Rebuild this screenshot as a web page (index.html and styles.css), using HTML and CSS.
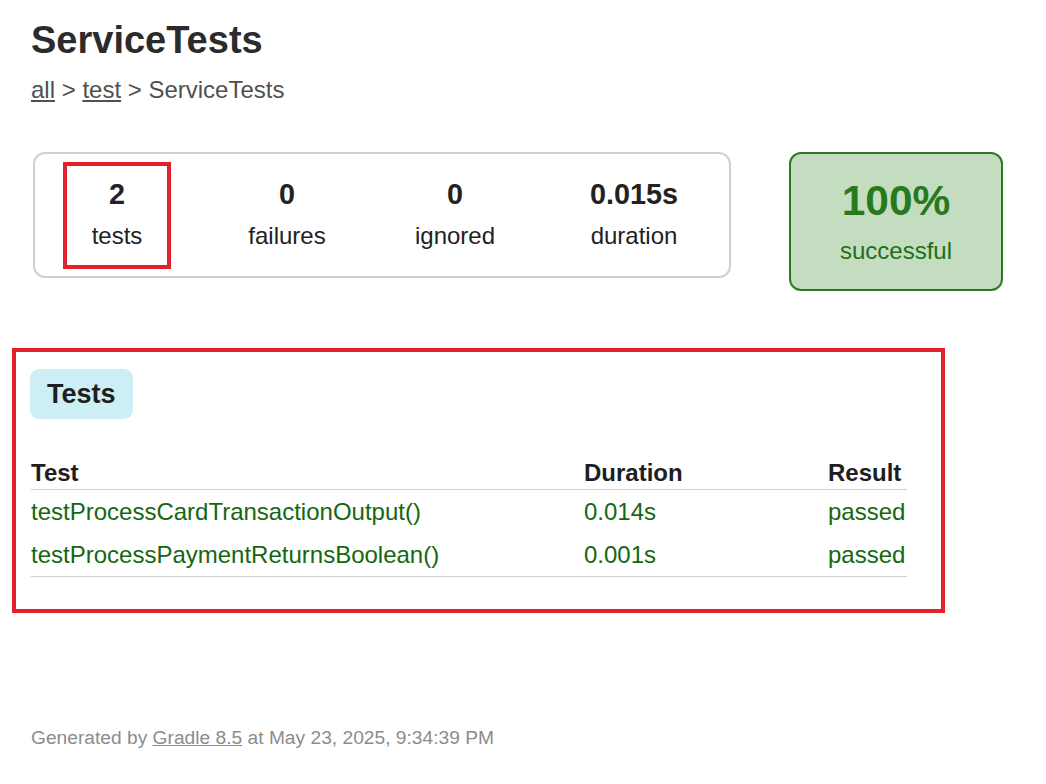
FILE: index.html
```html
<!DOCTYPE html>
<html lang="en">
<head>
<meta charset="utf-8">
<title>Test results - ServiceTests</title>
<link rel="stylesheet" href="styles.css">
</head>
<body>
<div class="page">
  <h1 class="title">ServiceTests</h1>
  <div class="breadcrumbs"><a href="#">all</a> &gt; <a href="#">test</a> &gt; ServiceTests</div>

  <div class="summary">
    <div class="summary-group">
      <div class="info-box">
        <div class="highlight">
          <div class="counter">2</div>
          <p class="label">tests</p>
        </div>
      </div>
      <div class="info-box">
        <div class="counter">0</div>
        <p class="label">failures</p>
      </div>
      <div class="info-box">
        <div class="counter">0</div>
        <p class="label">ignored</p>
      </div>
      <div class="info-box info-box-wide">
        <div class="counter">0.015s</div>
        <p class="label">duration</p>
      </div>
    </div>
    <div class="success-rate">
      <div class="percent">100%</div>
      <p class="label">successful</p>
    </div>
  </div>

  <div class="tests-frame">
    <div class="tab">Tests</div>
    <table class="tests-table">
      <thead>
        <tr>
          <th class="col-name">Test</th>
          <th class="col-duration">Duration</th>
          <th class="col-result">Result</th>
        </tr>
      </thead>
      <tbody>
        <tr>
          <td>testProcessCardTransactionOutput()</td>
          <td>0.014s</td>
          <td>passed</td>
        </tr>
        <tr>
          <td>testProcessPaymentReturnsBoolean()</td>
          <td>0.001s</td>
          <td>passed</td>
        </tr>
      </tbody>
    </table>
  </div>

  <div class="footer">Generated by <a href="#">Gradle 8.5</a> at May 23, 2025, 9:34:39 PM</div>
</div>
</body>
</html>
```

FILE: styles.css
```css
html, body {
  margin: 0;
  padding: 0;
  background: #ffffff;
}

body {
  font-family: "Liberation Sans", Arial, sans-serif;
  font-size: 24px;
  color: #262626;
}

.page {
  padding: 19px 31px 0 31px;
}

.title {
  margin: 0 0 15px 0;
  font-size: 38px;
  font-weight: bold;
  line-height: 42px;
  color: #2b2b2b;
}

.breadcrumbs {
  line-height: 27px;
  color: #505050;
}

.breadcrumbs a {
  color: #505050;
}

.summary {
  display: flex;
  align-items: flex-start;
  gap: 58px;
  margin: 49px 0 0 2px;
}

.summary-group {
  display: flex;
  width: 698px;
  box-sizing: border-box;
  border: 2px solid #d0d0d0;
  border-radius: 12px;
}

.info-box {
  width: 168px;
  padding: 24px 0 27px 0;
  text-align: center;
  display: flex;
  flex-direction: column;
  align-items: center;
}

.info-box-wide {
  width: 190px;
}

.highlight {
  width: 108px;
  box-sizing: border-box;
  border: 4px solid #e3212d;
  margin: -16px 0 -20px -4px;
  padding: 12px 0 16px 0;
}

.counter {
  font-size: 28.8px;
  font-weight: bold;
  line-height: 32px;
  margin-bottom: 12px;
  color: #222222;
}

.label {
  margin: 0;
  line-height: 27px;
  color: #222222;
}

.success-rate {
  width: 214px;
  box-sizing: border-box;
  border: 2px solid #2b7a20;
  border-radius: 12px;
  background: #c4ddc1;
  padding: 23px 0 25px 0;
  text-align: center;
}

.percent {
  font-size: 42.5px;
  font-weight: bold;
  line-height: 48px;
  margin-bottom: 12px;
  color: #267a1b;
}

.success-rate .label {
  color: #1f6f16;
}

.tests-frame {
  margin: 57px 0 0 -19px;
  width: 933px;
  box-sizing: border-box;
  border: 4px solid #e3212d;
  padding: 17px 34px 32px 14px;
}

.tab {
  display: inline-block;
  background: #cdeef4;
  border-radius: 9px;
  padding: 10px 17px;
  font-size: 27px;
  font-weight: bold;
  line-height: 30px;
  color: #1e1e1e;
}

.tests-table {
  margin: 40px 0 0 1px;
  width: 876px;
  border-collapse: collapse;
}

.tests-table th,
.tests-table td {
  padding: 0;
  text-align: left;
  line-height: 27px;
  white-space: nowrap;
}

.tests-table th {
  font-weight: bold;
  color: #1e1e1e;
  padding-bottom: 3px;
  border-bottom: 1px solid #d0d0d0;
}

.tests-table td {
  color: #15670f;
  padding: 8px 0;
}

.tests-table tbody tr:last-child td {
  border-bottom: 1px solid #d0d0d0;
}

.col-name {
  width: 553px;
}

.col-duration {
  width: 244px;
}

.col-result {
  width: 79px;
}

.footer {
  margin-top: 114px;
  font-size: 19.2px;
  line-height: 22px;
  color: #8c8c8c;
}

.footer a {
  color: #8c8c8c;
}
```
